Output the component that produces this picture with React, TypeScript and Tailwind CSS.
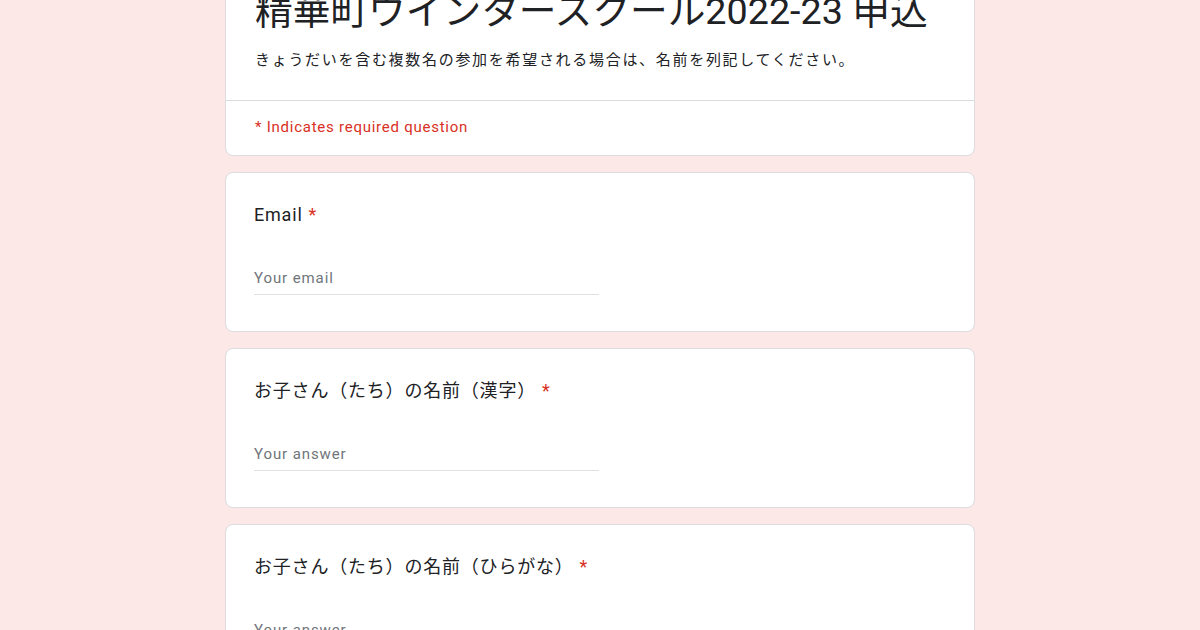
import React from 'react';

const questions = [
  { id: 'email', label: 'Email', placeholder: 'Your email' },
  { id: 'kanji', label: 'お子さん（たち）の名前（漢字）', placeholder: 'Your answer' },
  { id: 'kana', label: 'お子さん（たち）の名前（ひらがな）', placeholder: 'Your answer' },
];

const font = "font-['Roboto','Noto_Sans_CJK_JP',sans-serif]";

function QuestionCard({ label, placeholder }: { label: string; placeholder: string }) {
  return (
    <div className="bg-white border border-[#dadce0] rounded-lg px-[28px] pt-[30px] pb-[36px]">
      <div className="text-[18px] leading-6 text-[#202124] tracking-[0.8px]">
        {label}
        <span className="text-[#d93025] ml-[6px]">*</span>
      </div>
      <div className="mt-[39px] w-[345px] border-b border-[#e0e0e0] pb-[4px] text-[15px] leading-6 text-[#70757a] tracking-[0.9px]">
        {placeholder}
      </div>
    </div>
  );
}

export default function App() {
  return (
    <div className={`min-h-screen bg-[#fce8e6] overflow-hidden ${font}`}>
      <div className="w-[750px] mx-auto -mt-[40px] flex flex-col gap-4">
        {/* Header */}
        <div className="bg-white border border-[#dadce0] rounded-lg">
          <div className="px-[29px] pt-[28px] pb-[28px]">
            <h1 className="text-[37.7px] leading-[44px] text-[#202124]">
              精華町ウインタースクール2022-23 申込
            </h1>
            <p className="mt-[15px] text-[15px] leading-6 text-[#202124] tracking-[1.7px]">
              きょうだいを含む複数名の参加を希望される場合は、名前を列記してください。
            </p>
          </div>
          <div className="border-t border-[#dadce0] px-[29px] pt-[14px] pb-[16px] text-[15px] leading-6 text-[#d93025] tracking-[0.75px]">
            * Indicates required question
          </div>
        </div>

        {questions.map((q) => (
          <QuestionCard key={q.id} label={q.label} placeholder={q.placeholder} />
        ))}
      </div>
    </div>
  );
}
